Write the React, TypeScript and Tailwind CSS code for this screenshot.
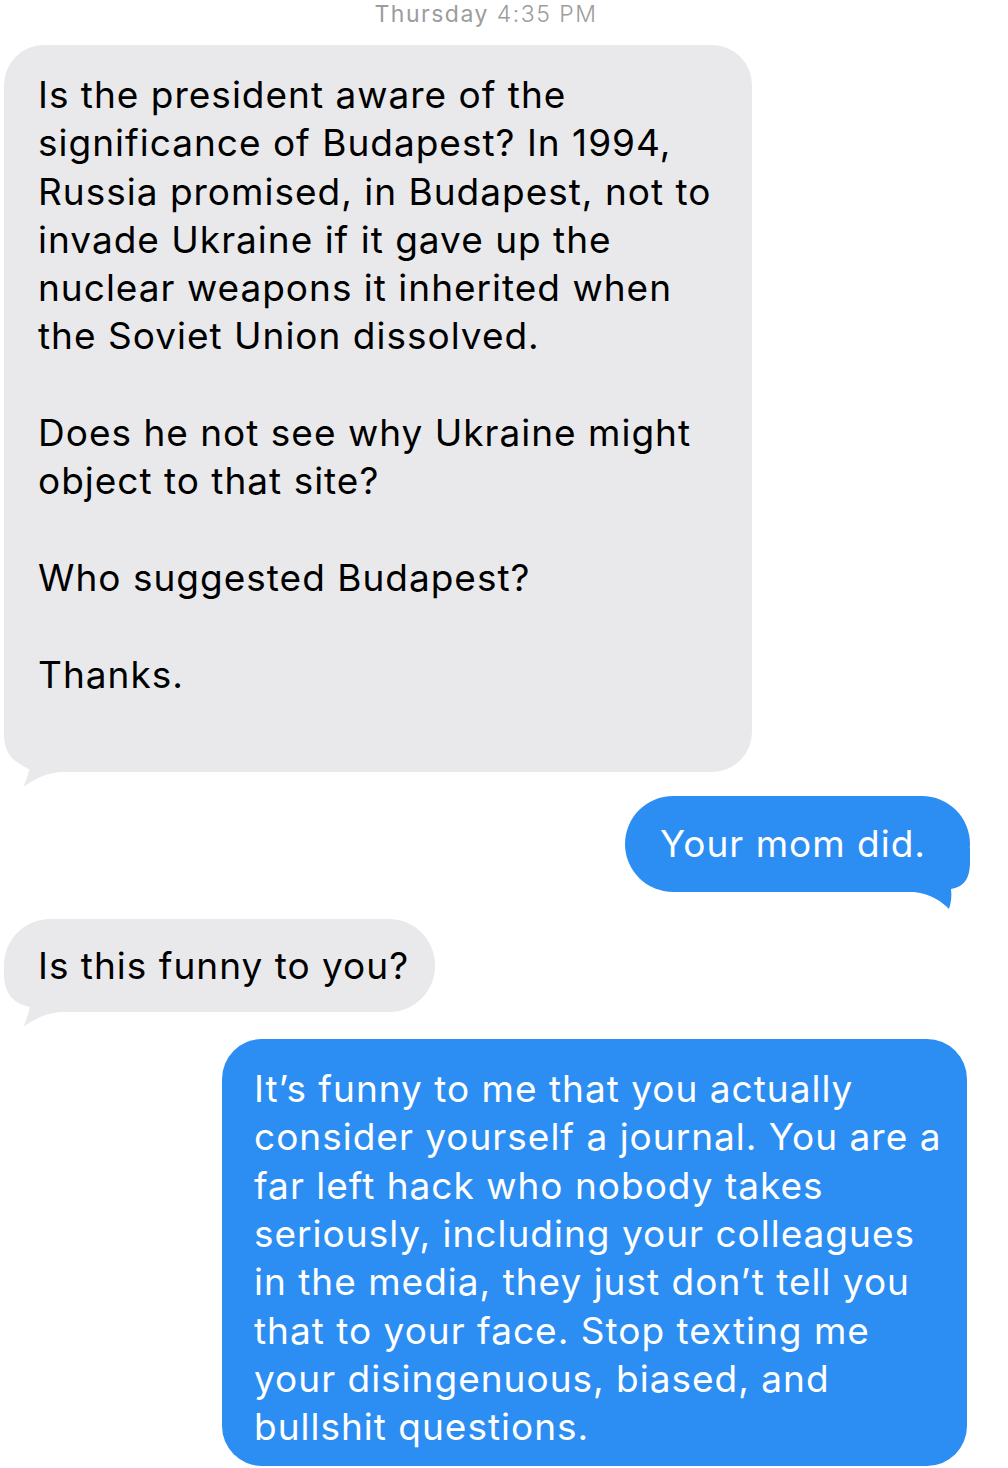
import React from 'react';

const font = "font-['Inter','Liberation_Sans',sans-serif]";

// little hook under the bottom-left corner of an incoming bubble
const GrayTail = () => (
  <svg
    className="absolute left-0 bottom-[-16px] w-[60px] h-[60px]"
    viewBox="0 0 60 60"
  >
    <path
      d="M0 0 L0 6 C0 26 10 36 26 39 C24 46 22 54 19 59 C28 53 38 46 56 44 L56 0 Z"
      fill="#e9e9eb"
    />
  </svg>
);

// same hook, mirrored, for outgoing bubbles
const BlueTail = () => (
  <svg
    className="absolute right-0 bottom-[-17px] w-[60px] h-[61px]"
    viewBox="0 0 60 61"
  >
    <path
      d="M60 0 L60 14 C60 32 53 39 41 41 C42 48 41 55 39 61 C32 54 22 46 4 44 L0 44 L0 0 Z"
      fill="#2c8ef3"
    />
  </svg>
);

const text = 'text-[37px] tracking-[1px]';

const App: React.FC = () => {
  return (
    <div className={`w-[1008px] h-[1468px] bg-white overflow-hidden ${font}`}>
      {/* timestamp */}
      <div className="h-[45px] pr-[36px] flex justify-center">
        <p className="text-[23px] leading-[28px] tracking-[1.5px] text-[#9c9c9c]">
          Thursday <span className="font-light">4:35 PM</span>
        </p>
      </div>

      {/* incoming */}
      <div className={`relative ml-[4px] w-[748px] rounded-[40px] bg-[#e9e9eb] pl-[34px] pt-[26px] pb-[25px] leading-[48.3px] text-black ${text}`}>
        <div className="relative z-10">
          <p>Is the president aware of the</p>
          <p>significance of Budapest? In 1994,</p>
          <p>Russia promised, in Budapest, not to</p>
          <p>invade Ukraine if it gave up the</p>
          <p>nuclear weapons it inherited when</p>
          <p>the Soviet Union dissolved.</p>
          <p>&nbsp;</p>
          <p>Does he not see why Ukraine might</p>
          <p>object to that site?</p>
          <p>&nbsp;</p>
          <p>Who suggested Budapest?</p>
          <p>&nbsp;</p>
          <p>Thanks.</p>
          <p>&nbsp;</p>
        </div>
        <GrayTail />
      </div>

      {/* outgoing */}
      <div className="mt-[24px] flex justify-end pr-[38px]">
        <div className={`relative w-[345px] h-[96px] rounded-[48px] bg-[#2c8ef3] pl-[35px] flex items-center text-white ${text}`}>
          <span className="relative z-10">Your mom did.</span>
          <BlueTail />
        </div>
      </div>

      {/* incoming */}
      <div className={`mt-[27px] relative ml-[4px] w-[431px] h-[93px] rounded-[46px] bg-[#e9e9eb] pl-[34px] flex items-center text-black ${text}`}>
        <span className="relative z-10">Is this funny to you?</span>
        <GrayTail />
      </div>

      {/* outgoing */}
      <div className="mt-[27px] flex justify-end pr-[41px]">
        <div className={`w-[745px] rounded-[40px] bg-[#2c8ef3] pl-[32px] pt-[26px] pb-[14px] leading-[48.3px] text-white ${text}`}>
          <p>It’s funny to me that you actually</p>
          <p>consider yourself a journal. You are a</p>
          <p>far left hack who nobody takes</p>
          <p>seriously, including your colleagues</p>
          <p>in the media, they just don’t tell you</p>
          <p>that to your face. Stop texting me</p>
          <p>your disingenuous, biased, and</p>
          <p>bullshit questions.</p>
        </div>
      </div>
    </div>
  );
};

export default App;
